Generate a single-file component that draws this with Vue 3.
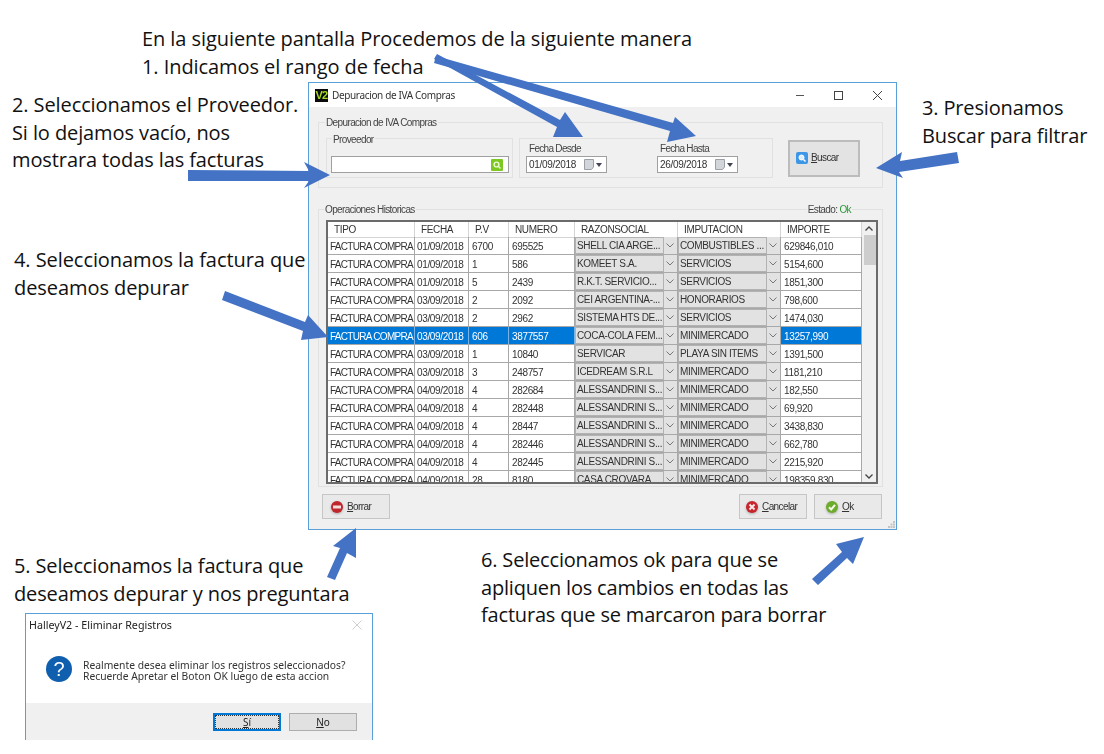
<script setup>
const raw = [
  ['01/09/2018','6700','695525','SHELL CIA ARGE...','COMBUSTIBLES ...','629846,010'],
  ['01/09/2018','1','586','KOMEET S.A.','SERVICIOS','5154,600'],
  ['01/09/2018','5','2439','R.K.T. SERVICIO...','SERVICIOS','1851,300'],
  ['03/09/2018','2','2092','CEI ARGENTINA-...','HONORARIOS','798,600'],
  ['03/09/2018','2','2962','SISTEMA HTS DE...','SERVICIOS','1474,030'],
  ['03/09/2018','606','3877557','COCA-COLA FEM...','MINIMERCADO','13257,990'],
  ['03/09/2018','1','10840','SERVICAR','PLAYA SIN ITEMS','1391,500'],
  ['03/09/2018','3','248757','ICEDREAM S.R.L','MINIMERCADO','1181,210'],
  ['04/09/2018','4','282684','ALESSANDRINI S...','MINIMERCADO','182,550'],
  ['04/09/2018','4','282448','ALESSANDRINI S...','MINIMERCADO','69,920'],
  ['04/09/2018','4','28447','ALESSANDRINI S...','MINIMERCADO','3438,830'],
  ['04/09/2018','4','282446','ALESSANDRINI S...','MINIMERCADO','662,780'],
  ['04/09/2018','4','282445','ALESSANDRINI S...','MINIMERCADO','2215,920'],
  ['04/09/2018','28','8180','CASA CROVARA','MINIMERCADO','198359,830'],
]
const rows = raw.map((r, i) => ({ id: i, fecha: r[0], pv: r[1], num: r[2], razon: r[3], imp: r[4], total: r[5], sel: i === 5 }))
const headers = ['TIPO', 'FECHA', 'P.V', 'NUMERO', 'RAZONSOCIAL', 'IMPUTACION', 'IMPORTE']
const arrows = [
  '434,59 437,54 560,120 565,112 583,137 553,137 557,127',
  '434,63 436,56 673,123 675,117 696,136 667,142 670,131',
  '188,170 309,171 304,162 330,175 304,188 309,181 188,181',
  '957,152 959,163 899,172 903,178 876,168 902,152 900,161',
  '225,291 222,300 303,331 301,340 328,337 308,315 305,322',
  '327,577 335,580 347,553 356,558 356,528 333,546 340,548',
  '812,579 818,585 847,558 853,564 864,537 836,544 842,552',
]
</script>

<template>
  <div class="canvas">
    <div class="note n1">En la siguiente pantalla Procedemos de la siguiente manera<br>1. Indicamos el rango de fecha</div>
    <div class="note n2">2. Seleccionamos el Proveedor.<br>Si lo dejamos vacío, nos<br>mostrara todas las facturas</div>
    <div class="note n3">3. Presionamos<br>Buscar para filtrar</div>
    <div class="note n4">4. Seleccionamos la factura que<br>deseamos depurar</div>
    <div class="note n5">5. Seleccionamos la factura que<br>deseamos depurar y nos preguntara</div>
    <div class="note n6">6. Seleccionamos ok para que se<br>apliquen los cambios en todas las<br>facturas que se marcaron para borrar</div>

    <div class="window">
      <header class="titlebar">
        <span class="logo">V2</span>
        <span class="wtitle">Depuracion de IVA Compras</span>
        <span class="controls">
          <svg width="86" height="12" viewBox="0 0 86 12">
            <path d="M0 6.500H8" stroke="#555" fill="none"/>
            <rect x="38.500" y="2.500" width="8" height="8" stroke="#444" fill="none"/>
            <path d="M77 2L86 11M86 2L77 11" stroke="#444" fill="none"/>
          </svg>
        </span>
      </header>

      <div class="wbody">
        <section class="group top">
          <span class="legend l-main">Depuracion de IVA Compras</span>
          <div class="subgroup prov">
            <span class="legend l-prov">Proveedor</span>
            <div class="input prov-input">
              <span class="go">
                <svg width="12" height="12" viewBox="0 0 12 12">
                  <rect width="12" height="12" rx="1" fill="#7cc820"/>
                  <circle cx="5.500" cy="5.500" r="2.400" fill="none" stroke="#eef9d8" stroke-width="1.400"/>
                  <path d="M7.500 7.500L9.500 9.500" stroke="#eef9d8" stroke-width="1.400"/>
                </svg>
              </span>
            </div>
          </div>
          <div class="subgroup dates">
            <div class="date">
              <label>Fecha Desde</label>
              <div class="input dinput">
                <span>01/09/2018</span>
                <svg class="cal" width="20" height="11" viewBox="0 0 20 11">
                  <path d="M.5 .5H9.500V8L7.500 10.500H.5Z" fill="#d2d6da" stroke="#9ba0a6"/>
                  <path d="M12 4H18L15 8Z" fill="#445"/>
                </svg>
              </div>
            </div>
            <div class="date">
              <label>Fecha Hasta</label>
              <div class="input dinput">
                <span>26/09/2018</span>
                <svg class="cal" width="20" height="11" viewBox="0 0 20 11">
                  <path d="M.5 .5H9.500V8L7.500 10.500H.5Z" fill="#d2d6da" stroke="#9ba0a6"/>
                  <path d="M12 4H18L15 8Z" fill="#445"/>
                </svg>
              </div>
            </div>
          </div>
          <button class="btn buscar">
            <svg width="12" height="12" viewBox="0 0 12 12">
              <rect width="12" height="12" rx="2" fill="#3d97e6"/>
              <circle cx="5.500" cy="5.500" r="2.500" fill="#dcecfb" stroke="#fff"/>
              <path d="M7.500 7.500L9.500 9.500" stroke="#fff" stroke-width="1.500"/>
            </svg>
            <span><u>B</u>uscar</span>
          </button>
        </section>

        <section class="group ops">
          <span class="legend l-ops">Operaciones Historicas</span>
          <span class="legend l-estado">Estado: <b>Ok</b></span>
          <div class="grid">
            <div class="table">
              <div class="row head">
                <div v-for="h in headers" :key="h" class="hcell">{{ h }}</div>
              </div>
              <div v-for="r in rows" :key="r.id" class="row" :class="{ sel: r.sel }">
                <div class="cell c1 tipo">FACTURA COMPRA</div>
                <div class="cell c1">{{ r.fecha }}</div>
                <div class="cell">{{ r.pv }}</div>
                <div class="cell">{{ r.num }}</div>
                <div class="combo">
                  <span class="ctext">{{ r.razon }}</span>
                  <span class="carrow"><svg width="8" height="5" viewBox="0 0 8 5"><path d="M.5 .5L4 4L7.500 .5" fill="none" stroke="#777"/></svg></span>
                </div>
                <div class="combo">
                  <span class="ctext">{{ r.imp }}</span>
                  <span class="carrow"><svg width="8" height="5" viewBox="0 0 8 5"><path d="M.5 .5L4 4L7.500 .5" fill="none" stroke="#777"/></svg></span>
                </div>
                <div class="cell">{{ r.total }}</div>
              </div>
            </div>
            <div class="scroll">
              <span class="sbtn"><svg width="8" height="5" viewBox="0 0 8 5"><path d="M.5 4.500L4 1L7.500 4.500" fill="none" stroke="#444" stroke-width="1.300"/></svg></span>
              <span class="thumb"></span>
              <span class="sbtn end"><svg width="8" height="5" viewBox="0 0 8 5"><path d="M.5 .5L4 4L7.500 .5" fill="none" stroke="#444" stroke-width="1.300"/></svg></span>
            </div>
          </div>
        </section>

        <footer class="actions">
          <button class="btn act a-borrar">
            <svg width="14" height="14" viewBox="0 0 14 14">
              <circle cx="7" cy="7" r="6" fill="#c0272d"/>
              <rect x="3" y="5.500" width="8" height="3" fill="#f6dede"/>
            </svg>
            <span><u>B</u>orrar</span>
          </button>
          <span class="spacer"></span>
          <button class="btn act a-cancel">
            <svg width="14" height="14" viewBox="0 0 14 14">
              <circle cx="7" cy="7" r="6" fill="#c8262c"/>
              <path d="M4.500 4.500L9.500 9.500M9.500 4.500L4.500 9.500" stroke="#fbe9e9" stroke-width="2"/>
            </svg>
            <span><u>C</u>ancelar</span>
          </button>
          <button class="btn act a-ok">
            <svg width="14" height="14" viewBox="0 0 14 14">
              <circle cx="7" cy="7" r="6" fill="#6dab2c"/>
              <path d="M4 7.200L6.200 9.500L10 4.800" stroke="#f2fae6" stroke-width="2" fill="none"/>
            </svg>
            <span><u>O</u>k</span>
          </button>
        </footer>
        <svg class="grip" width="7" height="7" viewBox="0 0 7 7">
          <path d="M5 0h2v2H5zM2.500 2.500h2v2h-2zM5 2.500h2v2H5zM0 5h2v2H0zM2.500 5h2v2h-2zM5 5h2v2H5z" fill="#c4c4c4"/>
        </svg>
      </div>
    </div>

    <div class="dialog">
      <header class="dtitle">
        <span>HalleyV2 - Eliminar Registros</span>
        <svg width="10" height="10" viewBox="0 0 10 10"><path d="M.5 .5L9.500 9.500M9.500 .5L.5 9.500" stroke="#cfcfcf" fill="none"/></svg>
      </header>
      <div class="dmsg">
        <span class="qicon">?</span>
        <p>Realmente desea eliminar los registros seleccionados?<br>Recuerde Apretar el Boton OK luego de esta accion</p>
      </div>
      <div class="dfoot">
        <button class="dbtn primary"><span class="dotted"><u>S</u>í</span></button>
        <button class="dbtn"><u>N</u>o</button>
      </div>
    </div>

    <svg class="arrows" width="1104" height="754" viewBox="0 0 1104 754">
      <polygon v-for="(p, i) in arrows" :key="i" :points="p" fill="#4472c4"/>
    </svg>
  </div>
</template>

<style scoped>
.canvas { position: relative; width: 1104px; height: 754px; background: #fff; overflow: hidden; font-family: "Liberation Sans", sans-serif; color: #222; }
.note { position: absolute; font-family: "Open Sans", sans-serif; font-size: 20px; line-height: 27.500px; color: #111; white-space: nowrap; letter-spacing: -0.07px; }
.n1 { left: 142px; top: 25px; }
.n2 { left: 12px; top: 91px; letter-spacing: -.1px; }
.n3 { left: 922px; top: 94px; letter-spacing: -.15px; }
.n4 { left: 14px; top: 246px; }
.n5 { left: 14px; top: 552px; letter-spacing: -.14px; }
.n6 { left: 481px; top: 546px; letter-spacing: -.18px; }

.window { position: absolute; left: 308px; top: 82px; width: 589px; height: 448px; box-sizing: border-box; border: 1px solid #5b9fd8; background: #f0f0f0; display: flex; flex-direction: column; font-size: 10px; letter-spacing: -.35px; filter: blur(.3px); }
.titlebar { height: 24px; flex: none; background: #fff; display: flex; align-items: center; padding-left: 6px; }
.logo { width: 13px; height: 13px; background: #0b0b0b; color: #a4dc20; font: bold 11px/13px "Liberation Sans", sans-serif; text-align: center; letter-spacing: -.8px; }
.wtitle { margin-left: 4px; font-family: "Noto Sans", sans-serif; font-size: 10px; color: #333; }
.controls { margin-left: auto; margin-right: 14px; display: flex; }

.wbody { flex: 1; position: relative; padding: 15px 13px 0 9px; display: flex; flex-direction: column; }
.group { position: relative; border: 1px solid #e1e1e1; box-sizing: border-box; }
.top { height: 66px; display: flex; padding: 15px 0 0 7px; }
.legend { position: absolute; background: #f0f0f0; padding: 0 1px; line-height: 12px; color: #444; white-space: nowrap; letter-spacing: -.62px; }
.l-main { left: 6px; top: -6px; }
.l-prov { left: 5px; top: -5px; }
.l-ops { left: 5px; top: -6px; }
.l-estado { right: 30px; top: -6px; }
.l-estado b { font-weight: normal; color: #2c9a3a; }
.subgroup { position: relative; border: 1px solid #e1e1e1; box-sizing: border-box; height: 40px; }
.prov { width: 187px; padding: 17px 0 0 4px; }
.input { background: #fff; border: 1px solid #a0a0a0; box-sizing: border-box; height: 17px; display: flex; align-items: center; }
.prov-input { width: 178px; justify-content: flex-end; padding-right: 5px; }
.go { display: flex; }
.dates { width: 254px; margin-left: 6px; display: flex; gap: 50px; padding-left: 6px; }
.date { width: 81px; display: flex; flex-direction: column; }
.date label { height: 17px; line-height: 20px; padding-left: 3px; color: #444; letter-spacing: -.7px; white-space: nowrap; }
.dinput { padding-left: 2px; color: #333; letter-spacing: -.3px; }
.cal { margin-left: auto; margin-right: 2px; }
.btn { font: 10px "Liberation Sans", sans-serif; letter-spacing: -.6px; color: #333; background: #e3e3e3; border: 1px solid #c6c6c6; padding: 0; display: flex; align-items: center; box-sizing: border-box; }
.buscar { width: 72px; height: 37px; margin: 2px 0 0 15px; border: 2px solid #bcbcbc; padding: 0 0 2px 6px; gap: 3px; }

.ops { margin-top: 21px; height: 278px; padding: 10px 0 0 7px; }
.grid { width: 552px; height: 264px; box-sizing: border-box; border: 2px solid #6b6b6b; display: flex; background: #f0f0f0; }
.table { width: 534px; overflow: hidden; flex: none; }
.row { display: grid; grid-template-columns: 87px 54px 40px 66px 103px 103px 81px; height: 18px; box-sizing: border-box; background: #fff; }
.head { height: 15px; }
.hcell { padding-left: 6px; line-height: 15px; border-right: 1px solid #d4d4d4; border-bottom: 1px solid #d4d4d4; box-sizing: border-box; color: #333; }
.cell { padding: 2px 0 0 3px; line-height: 15px; border-right: 1px solid #a8a8a8; border-bottom: 1px solid #a8a8a8; box-sizing: border-box; white-space: nowrap; overflow: hidden; color: #333; }
.c1 { padding-left: 2px; }
.tipo { letter-spacing: -.7px; }
.sel .cell { background: #0078d7; color: #fff; border-right-color: #7ab4e6; }
.combo { display: flex; background: #e2e2e2; box-sizing: border-box; border-right: 1px solid #a8a8a8; border-bottom: 1px solid #a8a8a8; }
.ctext { flex: 1; padding: 1px 0 0 1px; line-height: 14px; border: 1px solid #b2b2b2; color: #333; white-space: nowrap; overflow: hidden; }
.carrow { width: 11px; padding-right: 2px; flex: none; display: flex; align-items: center; justify-content: center; }
.scroll { flex: 1; display: flex; flex-direction: column; align-items: center; }
.sbtn { height: 13px; display: flex; align-items: center; justify-content: center; }
.thumb { width: 12px; height: 30px; background: #cdcdcd; margin-left: 2px; }
.end { margin-top: auto; height: 11px; }

.actions { display: flex; gap: 7px; margin-top: 7px; padding-left: 4px; margin-right: 1px; }
.act { width: 68px; height: 25px; gap: 3px; background: #e9e9e9; }
.act svg { filter: drop-shadow(0 1px 1px #aaa); }
.a-borrar { padding-left: 7px; }
.a-cancel { padding-left: 5px; }
.a-ok { padding-left: 10px; }
.spacer { flex: 1; }
.grip { position: absolute; right: 1px; bottom: 1px; }

.dialog { position: absolute; left: 25px; top: 613px; width: 348px; height: 127px; box-sizing: border-box; border: 1px solid #5b9fd8; border-bottom: none; background: #fff; display: flex; flex-direction: column; font-family: "Noto Sans", sans-serif; font-size: 10px; color: #222; filter: blur(.25px); }
.dtitle { height: 23px; flex: none; display: flex; align-items: center; justify-content: space-between; padding: 0 10px 1px 3px; box-sizing: border-box; font-size: 10.700px; color: #222; }
.dmsg { flex: 1; display: flex; align-items: center; padding: 0 0 2px 20px; }
.qicon { width: 26px; height: 26px; border-radius: 50%; background: #0f5fae; color: #fff; font: 20px/26px "Liberation Sans", sans-serif; text-align: center; flex: none; }
.dmsg p { margin: 4px 0 0 11px; font-size: 10.300px; line-height: 11.500px; font-family: "Noto Sans", sans-serif; color: #333; white-space: nowrap; }
.dfoot { height: 37px; flex: none; background: #f0f0f0; display: flex; justify-content: flex-end; gap: 8px; padding: 10px 15px 0 0; box-sizing: border-box; }
.dbtn { width: 68px; height: 18px; padding: 0; background: #e1e1e1; border: 1px solid #adadad; font: 10px "Noto Sans", sans-serif; color: #222; }
.primary { border: 2px solid #0078d7; display: flex; align-items: center; justify-content: center; }
.dotted { outline: 1px dotted #333; width: 62px; line-height: 12px; text-align: center; }

.arrows { position: absolute; left: 0; top: 0; pointer-events: none; }
</style>
